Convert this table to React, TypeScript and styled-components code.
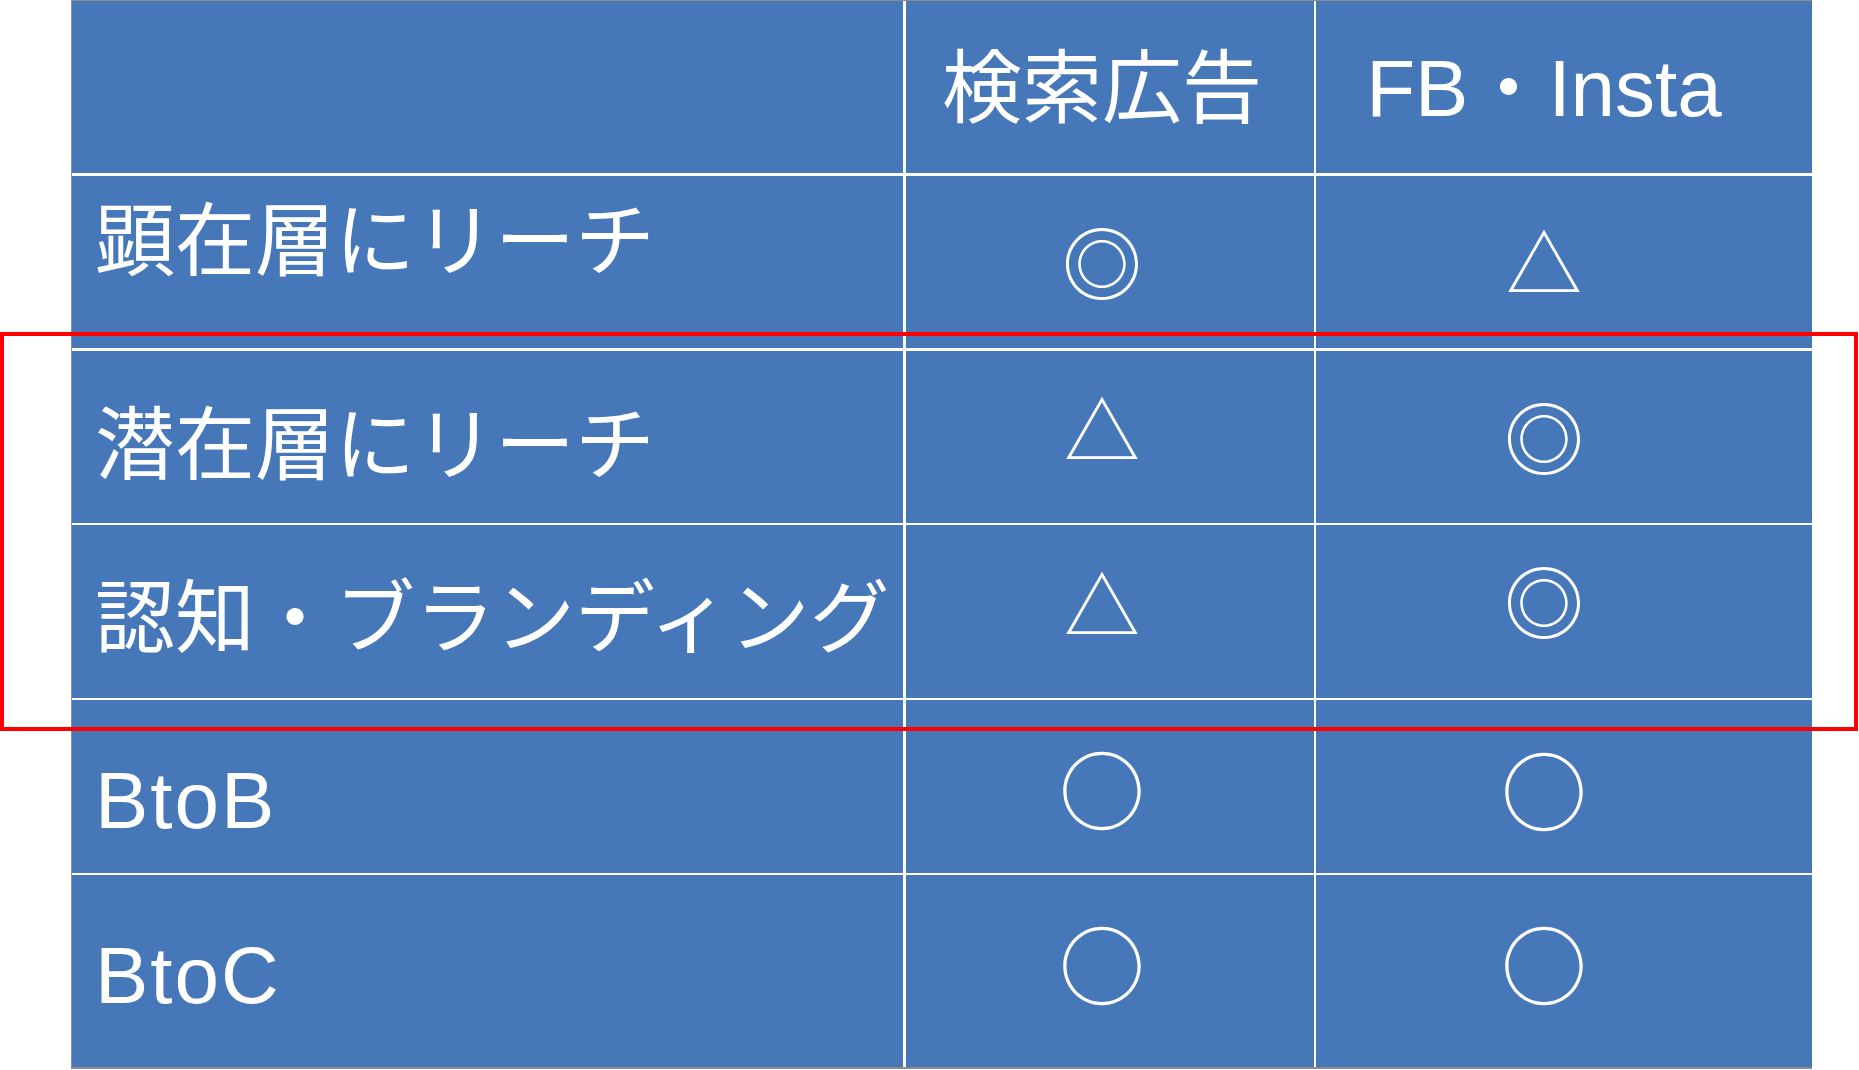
import React from "react";
import styled, { createGlobalStyle } from "styled-components";

const Global = createGlobalStyle`
  html, body { margin: 0; padding: 0; background: #ffffff; }
  body { overflow: hidden; }
`;

const Page = styled.div`
  position: relative;
  width: 1859px;
  height: 1070px;
  background: #ffffff;
`;

const Table = styled.div`
  display: grid;
  grid-template-columns: 831px 408px 496px;
  grid-template-rows: 172.3px repeat(4, 172.35px) 191.8px;
  column-gap: 2.5px;
  row-gap: 2.5px;
  width: 1740px;
  margin-left: 71px;
  background: #ffffff;
  border-left: 1px solid #8c8c8c;
  border-top: 1px solid #8c8c8c;
  border-bottom: 2px solid #8c8c8c;
`;

const Cell = styled.div`
  background: #4677b8;
  color: #ffffff;
  font-family: "Liberation Sans", "Noto Sans CJK JP", sans-serif;
  font-size: 80px;
  line-height: 80px;
  white-space: nowrap;
  overflow: hidden;
`;

const LabelCell = styled(Cell)<{ $top: number; $track: number }>`
  padding: ${(p) => p.$top}px 0 0 23px;
  letter-spacing: ${(p) => p.$track}px;
`;

const HeadCell = styled(Cell)<{ $shift: number }>`
  display: flex;
  justify-content: center;
  padding: 48px ${(p) => p.$shift}px 0 0;
`;

const MarkCell = styled(Cell)<{ $top: number; $shift: number }>`
  display: flex;
  justify-content: center;
  padding: ${(p) => p.$top}px ${(p) => p.$shift}px 0 0;
`;

const Mark = styled.span<{ $size: number }>`
  display: block;
  font-family: "Noto Sans CJK JP", sans-serif;
  font-size: ${(p) => p.$size}px;
  line-height: 1;
`;

const Highlight = styled.div`
  position: absolute;
  left: 0;
  top: 332px;
  width: 1858px;
  height: 399px;
  box-sizing: border-box;
  border: 4.5px solid #ff0000;
  pointer-events: none;
`;

const markSize: Record<string, number> = { "◎": 80, "△": 76, "○": 86 };

type Row = { label: string; labelTop: number; track: number; marks: { ch: string; y: number }[] };

const rows: Row[] = [
  { label: "顕在層にリーチ", labelTop: 26, track: 0, marks: [{ ch: "◎", y: 88 }, { ch: "△", y: 88 }] },
  { label: "潜在層にリーチ", labelTop: 55, track: 0, marks: [{ ch: "△", y: 80.5 }, { ch: "◎", y: 88 }] },
  { label: "認知・ブランディング", labelTop: 54, track: 0, marks: [{ ch: "△", y: 80.5 }, { ch: "◎", y: 76.5 }] },
  { label: "BtoB", labelTop: 61, track: 2, marks: [{ ch: "○", y: 91.5 }, { ch: "○", y: 92.5 }] },
  { label: "BtoC", labelTop: 61, track: 2, marks: [{ ch: "○", y: 91.5 }, { ch: "○", y: 91.5 }] },
];

const shifts = [15, 40];

export default function App() {
  return (
    <Page>
      <Global />
      <Table>
        <Cell />
        <HeadCell $shift={shifts[0]}>検索広告</HeadCell>
        <HeadCell $shift={shifts[1]}>FB・Insta</HeadCell>
        {rows.map((r) => (
          <React.Fragment key={r.label}>
            <LabelCell $top={r.labelTop} $track={r.track}>{r.label}</LabelCell>
            {r.marks.map((m, i) => (
              <MarkCell key={i} $top={m.y - 0.556 * markSize[m.ch]} $shift={shifts[i]}>
                <Mark $size={markSize[m.ch]}>{m.ch}</Mark>
              </MarkCell>
            ))}
          </React.Fragment>
        ))}
      </Table>
      <Highlight />
    </Page>
  );
}
